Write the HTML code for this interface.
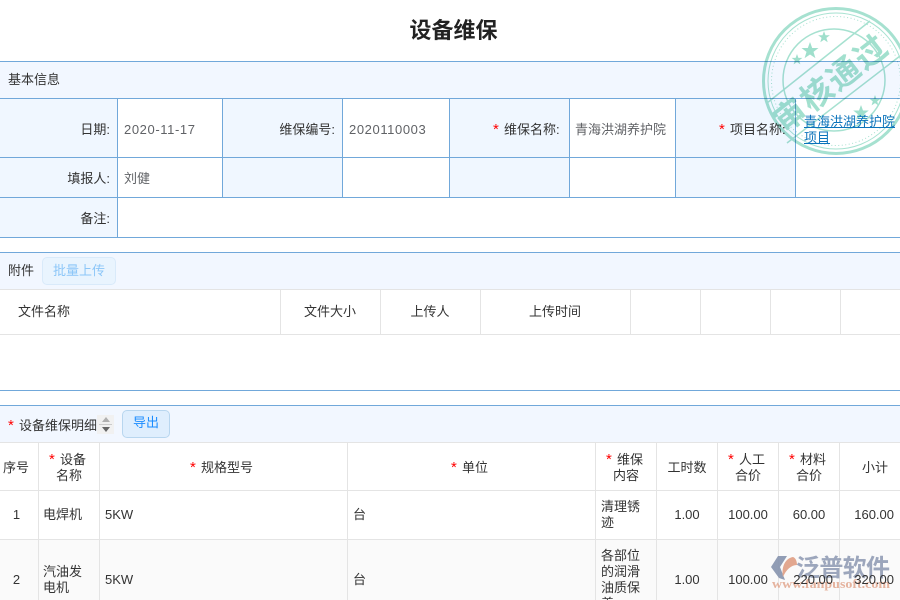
<!DOCTYPE html>
<html lang="zh">
<head>
<meta charset="utf-8">
<style>
html,body{margin:0;padding:0;background:#fff;}
#p{position:relative;width:900px;height:600px;overflow:hidden;background:#fff;font:13px/16px "Liberation Sans","Noto Sans CJK SC",sans-serif;color:#333;}
#p div{position:absolute;}
.t{white-space:nowrap;height:16px;margin-top:1px;}
.m{margin-top:1px;}
.r{text-align:right;}
.c{text-align:center;}
.v{color:#606266;}
.f{letter-spacing:.6px;}
.s{color:#f00;font-size:15px;}
.h{height:1px;left:0;width:900px;}
.b{background:#71a8da;}
.g{background:#e4e4e4;}
.vl{width:1px;}
</style>
</head>
<body>
<div id="p">
<div class="t c" style="left:0;width:907px;top:15px;height:30px;font-size:22px;line-height:30px;font-weight:bold;color:#222">设备维保</div>

<!-- basic info backgrounds -->
<div style="left:0;top:62px;width:900px;height:36px;background:#f2f7ff"></div>
<div style="left:0;top:99px;width:117px;height:138px;background:#f0f7ff"></div>
<div style="left:223px;top:99px;width:119px;height:98px;background:#f0f7ff"></div>
<div style="left:450px;top:99px;width:119px;height:98px;background:#f0f7ff"></div>
<div style="left:676px;top:99px;width:119px;height:98px;background:#f0f7ff"></div>

<div class="h b" style="top:61px"></div>
<div class="h b" style="top:98px"></div>
<div class="h b" style="top:157px"></div>
<div class="h b" style="top:197px"></div>
<div class="h b" style="top:237px"></div>
<div class="vl b" style="left:117px;top:98px;height:139px"></div>
<div class="vl b" style="left:222px;top:98px;height:99px"></div>
<div class="vl b" style="left:342px;top:98px;height:99px"></div>
<div class="vl b" style="left:449px;top:98px;height:99px"></div>
<div class="vl b" style="left:569px;top:98px;height:99px"></div>
<div class="vl b" style="left:675px;top:98px;height:99px"></div>
<div class="vl b" style="left:795px;top:98px;height:99px"></div>

<div class="t" style="left:8px;top:71px">基本信息</div>
<div class="t r" style="left:0;width:110px;top:121px">日期:</div>
<div class="t v f" style="left:124px;top:121px">2020-11-17</div>
<div class="t r" style="left:222px;width:113px;top:121px">维保编号:</div>
<div class="t v f" style="left:349px;top:121px">2020110003</div>
<div class="t" style="left:493px;top:121px"><span class="s">*</span></div>
<div class="t" style="left:504px;top:121px">维保名称:</div>
<div class="t v" style="left:575px;top:121px">青海洪湖养护院</div>
<div class="t" style="left:719px;top:121px"><span class="s">*</span></div>
<div class="t" style="left:730px;top:121px">项目名称:</div>
<div style="left:804px;top:113px;width:92px;color:#0b73bb;text-decoration:underline;z-index:5" class="m">青海洪湖养护院<br>项目</div>
<div class="t r" style="left:0;width:110px;top:170px">填报人:</div>
<div class="t v" style="left:124px;top:170px">刘健</div>
<div class="t r" style="left:0;width:110px;top:210px">备注:</div>

<!-- attachments -->
<div style="left:0;top:253px;width:900px;height:36px;background:#f2f7ff"></div>
<div class="h b" style="top:252px"></div>
<div class="h g" style="top:289px"></div>
<div class="t" style="left:8px;top:262px">附件</div>
<div class="c" style="left:42px;top:257px;width:72px;height:26px;line-height:25px;border:1px solid #d9eafa;border-radius:5px;background:#e9f4fe;color:#8cc6f8">批量上传</div>
<div class="t c" style="left:0;width:88px;top:303px">文件名称</div>
<div class="t c" style="left:280px;width:100px;top:303px">文件大小</div>
<div class="t c" style="left:380px;width:100px;top:303px">上传人</div>
<div class="t c" style="left:480px;width:150px;top:303px">上传时间</div>
<div class="vl g" style="left:280px;top:290px;height:44px"></div>
<div class="vl g" style="left:380px;top:290px;height:44px"></div>
<div class="vl g" style="left:480px;top:290px;height:44px"></div>
<div class="vl g" style="left:630px;top:290px;height:44px"></div>
<div class="vl g" style="left:700px;top:290px;height:44px"></div>
<div class="vl g" style="left:770px;top:290px;height:44px"></div>
<div class="vl g" style="left:840px;top:290px;height:44px"></div>
<div class="h g" style="top:334px"></div>
<div class="h b" style="top:390px"></div>

<!-- detail -->
<div style="left:0;top:406px;width:900px;height:36px;background:#f2f7ff"></div>
<div class="h b" style="top:405px"></div>
<div class="h g" style="top:442px"></div>
<div class="t" style="left:8px;top:417px"><span class="s">*</span></div>
<div class="t" style="left:19px;top:417px">设备维保明细</div>
<div style="left:97px;top:415px;width:17px;height:19px;background:#f1f1f1">
<svg width="17" height="19" style="display:block"><path d="M5 7L9 2L13 7Z" fill="#b0b0b0"/><path d="M2 9.5H15" stroke="#ccc" stroke-width="1"/><path d="M5 12H13L9 17Z" fill="#666"/></svg>
</div>
<div class="c" style="left:122px;top:410px;width:46px;height:26px;line-height:24px;border:1px solid #b8d6ef;border-radius:5px;background:#dfeefd;color:#1a8cff">导出</div>

<div class="h g" style="top:490px"></div>
<div class="h g" style="top:539px"></div>
<div style="left:0;top:540px;width:900px;height:60px;background:#fafafa"></div>
<div class="vl g" style="left:38px;top:443px;height:157px"></div>
<div class="vl g" style="left:99px;top:443px;height:157px"></div>
<div class="vl g" style="left:347px;top:443px;height:157px"></div>
<div class="vl g" style="left:595px;top:443px;height:157px"></div>
<div class="vl g" style="left:656px;top:443px;height:157px"></div>
<div class="vl g" style="left:717px;top:443px;height:157px"></div>
<div class="vl g" style="left:778px;top:443px;height:157px"></div>
<div class="vl g" style="left:839px;top:443px;height:157px"></div>

<div class="t c" style="left:0;width:32px;top:459px">序号</div>
<div class="t" style="left:49px;top:451px"><span class="s">*</span></div>
<div class="t" style="left:60px;top:451px">设备</div>
<div class="t" style="left:56px;top:467px">名称</div>
<div class="t" style="left:190px;top:459px"><span class="s">*</span></div>
<div class="t" style="left:201px;top:459px">规格型号</div>
<div class="t" style="left:451px;top:459px"><span class="s">*</span></div>
<div class="t" style="left:462px;top:459px">单位</div>
<div class="t" style="left:606px;top:451px"><span class="s">*</span></div>
<div class="t" style="left:617px;top:451px">维保</div>
<div class="t" style="left:613px;top:467px">内容</div>
<div class="t c" style="left:657px;width:60px;top:459px">工时数</div>
<div class="t" style="left:728px;top:451px"><span class="s">*</span></div>
<div class="t" style="left:739px;top:451px">人工</div>
<div class="t" style="left:735px;top:467px">合价</div>
<div class="t" style="left:789px;top:451px"><span class="s">*</span></div>
<div class="t" style="left:800px;top:451px">材料</div>
<div class="t" style="left:796px;top:467px">合价</div>
<div class="t c" style="left:840px;width:70px;top:459px">小计</div>

<div class="t c" style="left:0;width:33px;top:506px">1</div>
<div class="t" style="left:43px;top:506px">电焊机</div>
<div class="t" style="left:105px;top:506px">5KW</div>
<div class="t" style="left:353px;top:506px">台</div>
<div class="m" style="left:601px;top:498px;width:50px">清理锈<br>迹</div>
<div class="t c" style="left:657px;width:60px;top:506px">1.00</div>
<div class="t c" style="left:718px;width:60px;top:506px">100.00</div>
<div class="t c" style="left:779px;width:60px;top:506px">60.00</div>
<div class="t r" style="left:840px;width:54px;top:506px">160.00</div>

<div class="t c" style="left:0;width:33px;top:571px">2</div>
<div class="m" style="left:43px;top:563px;width:50px">汽油发<br>电机</div>
<div class="t" style="left:105px;top:571px">5KW</div>
<div class="t" style="left:353px;top:571px">台</div>
<div class="m" style="left:601px;top:547px;width:50px">各部位<br>的润滑<br>油质保<br>养</div>
<div class="t c" style="left:657px;width:60px;top:571px">1.00</div>
<div class="t c" style="left:718px;width:60px;top:571px">100.00</div>
<div class="t r" style="left:779px;width:54px;top:571px;z-index:6">220.00</div>
<div class="t r" style="left:840px;width:54px;top:571px;z-index:6">320.00</div>

<!-- stamp -->
<svg style="position:absolute;left:750px;top:0;z-index:4;mix-blend-mode:multiply" width="150" height="165" viewBox="750 0 150 165">
<g fill="none" stroke="#a6e1d0">
<circle cx="836" cy="81" r="72.5" stroke-width="3"/>
<circle cx="836" cy="81" r="68" stroke-width="1"/>
<circle cx="836" cy="81" r="64.5" stroke-width="1" stroke-dasharray="1 2.5"/>
<circle cx="834" cy="80" r="51" stroke-width="1.5"/>
</g>
<path d="M767 103L870 21M787 143L900 56" stroke="#a6e1d0" stroke-width="1.5" fill="none"/>
<g fill="#9fdfcc">
<path d="M810 42l2.2 6h6.3l-5 3.9 1.9 6.2-5.4-3.6-5.4 3.6 1.9-6.2-5-3.9h6.3z"/>
<path d="M797 54l1.4 3.9h4l-3.2 2.5 1.2 4-3.4-2.3-3.4 2.3 1.2-4-3.2-2.5h4z"/>
<path d="M824 31l1.5 4.2h4.4l-3.5 2.7 1.3 4.3-3.7-2.5-3.7 2.5 1.3-4.3-3.5-2.7h4.4z"/>
<path d="M861 105l2 5.5h5.8l-4.6 3.6 1.7 5.7-4.9-3.3-4.9 3.3 1.7-5.7-4.6-3.6h5.8z"/>
<path d="M875 95l1.4 3.9h4l-3.2 2.5 1.2 4-3.4-2.3-3.4 2.3 1.2-4-3.2-2.5h4z"/>
</g>
<text x="0" y="0" transform="translate(838 92) rotate(-38)" text-anchor="middle" font-family="'Noto Sans CJK SC',sans-serif" font-weight="bold" font-size="32" letter-spacing="2" fill="#a2e0ce">审核通过</text>
</svg>

<!-- logo -->
<svg style="position:absolute;left:765px;top:550px;z-index:5" width="135" height="50" viewBox="765 550 135 50">
<path d="M778 556H787L780 567L785 580L779 578L771 567Z" fill="#8592ad" opacity=".9"/>
<path d="M783 577C781 566 786 558 793 557C796 558 797 562 797 565C791 565 786 570 783 577Z" fill="#e2a78f"/>
<text x="796" y="576" font-family="'Noto Sans CJK SC',sans-serif" font-weight="bold" font-size="24" fill="#8592ad" opacity=".8" textLength="94">泛普软件</text>
<text x="772" y="588" font-family="'Liberation Serif',serif" font-weight="bold" font-size="13" fill="#e2a78f" opacity=".85" textLength="118" lengthAdjust="spacingAndGlyphs">www.fanpusoft.com</text>
</svg>
</div>
</body>
</html>
